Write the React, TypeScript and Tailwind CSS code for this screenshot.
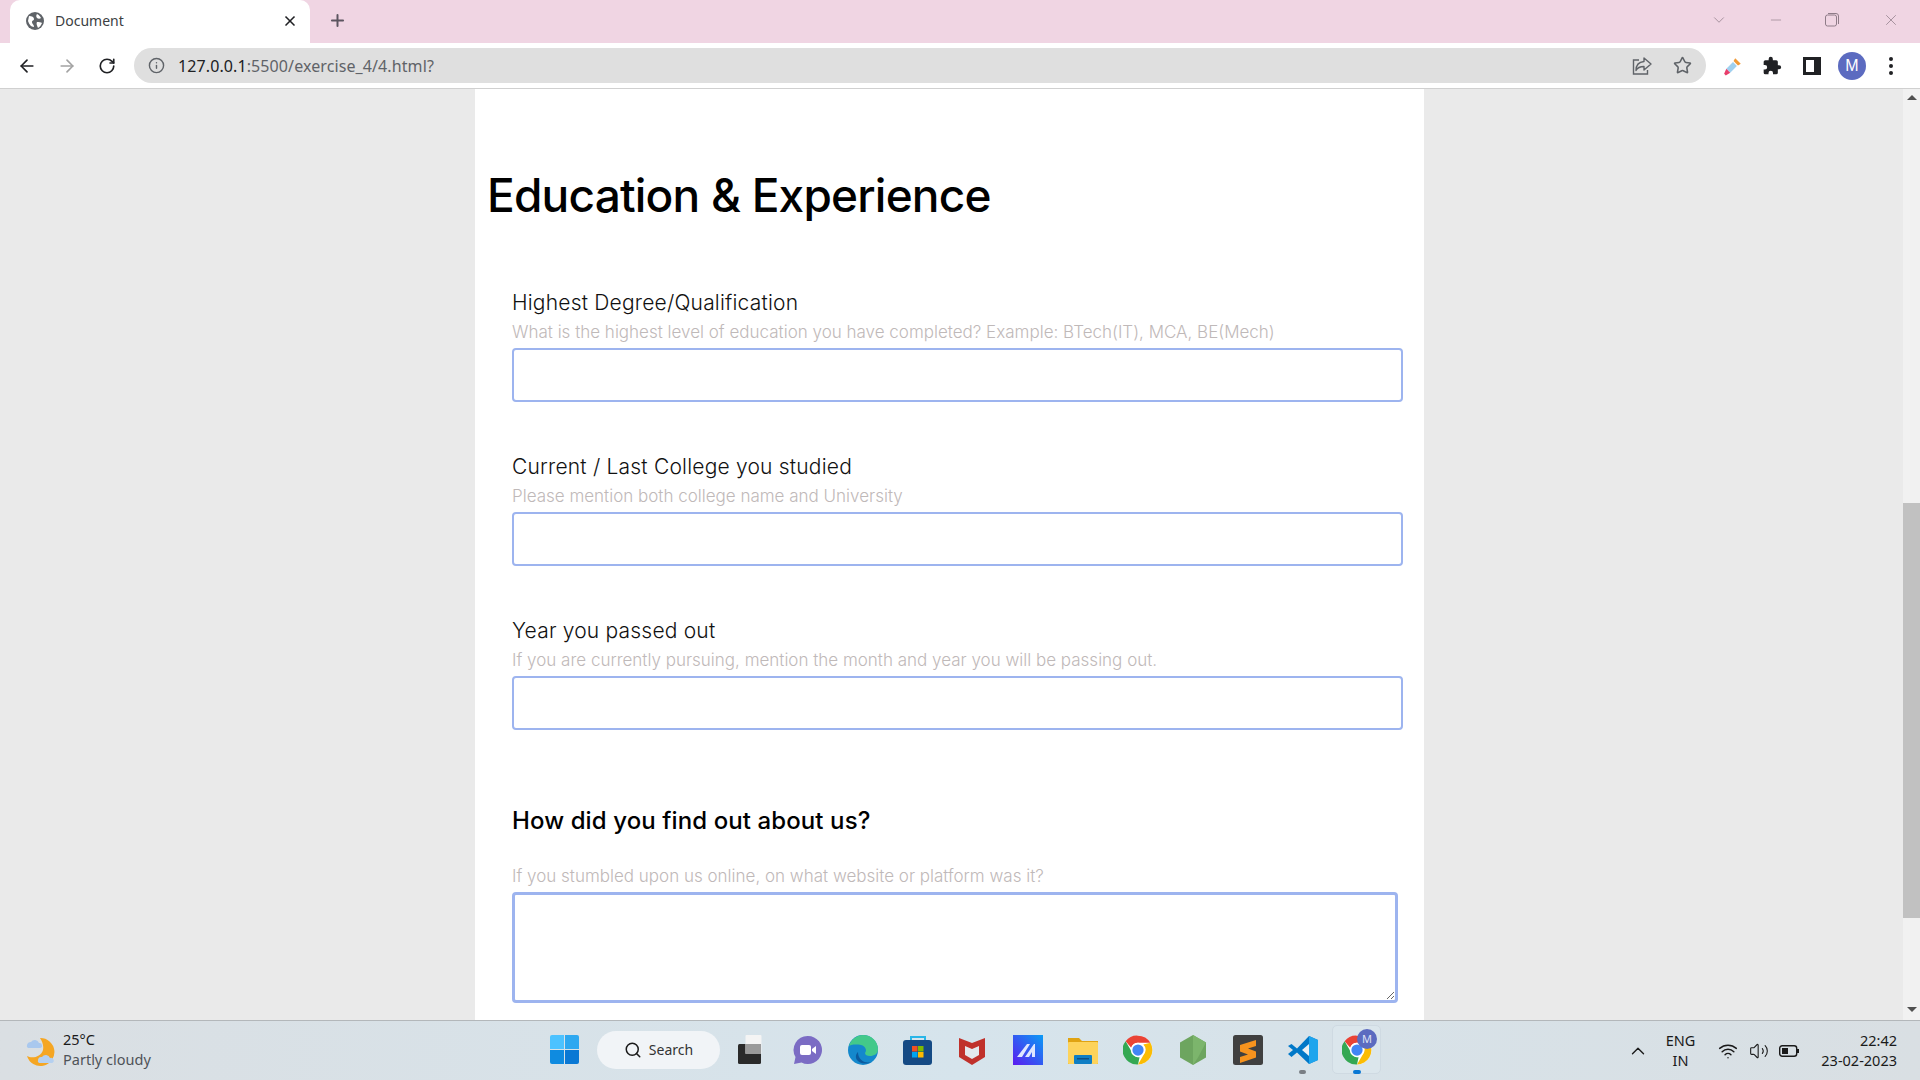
import { ArrowLeft, ArrowRight, RotateCw, Info, Star, Search, ChevronUp, ChevronDown, Minus, X, Plus, Wifi, Volume2 } from "lucide-react";

const uiFont = "font-['Liberation_Sans',Arial,sans-serif]";

const ChromeLogo = ({ size = 30 }: { size?: number }) => (
    <svg width={size} height={size} viewBox="0 0 48 48">
        <circle cx="24" cy="24" r="23" fill="#fff" />
        <path d="M24 1a23 23 0 0 1 19.9 11.5H24a11.5 11.5 0 0 0-10.9 7.8L4.2 10A23 23 0 0 1 24 1z" fill="#ea4335" />
        <path d="M43.9 12.5A23 23 0 0 1 24 47l10-17.2a11.5 11.5 0 0 0-1.5-14.5z" fill="#fbbc04" />
        <path d="M24 47A23 23 0 0 1 4.2 10l10 17.2a11.5 11.5 0 0 0 12.3 8.3z" fill="#34a853" />
        <circle cx="24" cy="24" r="11.5" fill="#fff" />
        <circle cx="24" cy="24" r="9" fill="#4285f4" />
    </svg>
);

const WeatherIcon = () => (
    <svg width="32" height="32" viewBox="0 0 32 32">
        <path d="M16 3a14 14 0 1 1-13 18c5 3 14 1 16-6 1-5-1-9-3-12z" fill="#f5a623" />
        <path d="M3 10a4 4 0 0 1 4-3 4.500 4.500 0 0 1 8 1 2.500 2.500 0 0 1 1 5H4a2.500 2.500 0 0 1-1-3z" fill="#a9c8ee" />
        <path d="M14 25a3.500 3.500 0 0 1 4-3 4.500 4.500 0 0 1 8 1 2.500 2.500 0 0 1 2 5H15a2.500 2.500 0 0 1-1-3z" fill="#b5d0f0" />
    </svg>
);

const WindowsLogo = () => (
    <div className="grid w-[29px] h-[29px] grid-cols-2 gap-[1px]">
        <div className="rounded-tl-[2px] bg-[#4cc2ff]" />
        <div className="rounded-tr-[2px] bg-[#2ea8f0]" />
        <div className="rounded-bl-[2px] bg-[#0f8be0]" />
        <div className="rounded-br-[2px] bg-[#0a78d4]" />
    </div>
);

const TaskView = () => (
    <svg width="24" height="29" viewBox="0 0 24 29">
        <rect x="0" y="9" width="23" height="20" rx="1.500" fill="#2a2a2a" />
        <rect x="7.500" y="0" width="16" height="19" rx="1" fill="#f4f4f4" />
        <rect x="7.500" y="9" width="15.500" height="10" fill="#9a9a9a" />
    </svg>
);

const TeamsChat = () => (
    <svg width="30" height="30" viewBox="0 0 30 30">
        <path d="M15 1a14 14 0 1 1-6.500 26.400L1 29l1.500-7A14 14 0 0 1 15 1z" fill="#7b6cc4" />
        <rect x="7" y="10" width="11" height="10" rx="2" fill="#fff" />
        <path d="M19 14l4-3v8l-4-3z" fill="#fff" />
    </svg>
);

const EdgeLogo = () => (
    <svg width="30" height="30" viewBox="0 0 30 30">
        <circle cx="15" cy="15" r="15" fill="#1488cc" />
        <path d="M1 11C3 4 9 0 15 0c8 0 15 6 15 14 0 5-4 7-8 7-3 0-5-1-5-3 2-2 1-7-4-8-6-1-11 0-12 1z" fill="#43c98a" />
        <path d="M10 17c0 7 6 12 13 10-6 3-12 1-14-2-2-3-1-6 1-8z" fill="#0c5a9e" />
    </svg>
);

const StoreLogo = () => (
    <svg width="30" height="30" viewBox="0 0 30 30">
        <path d="M8 5V2h14v3" fill="none" stroke="#29b6e8" strokeWidth="2" />
        <rect x="0" y="5" width="29" height="25" rx="3" fill="#154a84" />
        <rect x="9" y="11" width="5.500" height="5.500" fill="#f25022" />
        <rect x="15" y="11" width="5.500" height="5.500" fill="#7fba00" />
        <rect x="9" y="17" width="5.500" height="5.500" fill="#00a4ef" />
        <rect x="15" y="17" width="5.500" height="5.500" fill="#ffb900" />
    </svg>
);

const McAfeeLogo = () => (
    <svg width="28" height="30" viewBox="0 0 28 30">
        <path d="M1 3l13 5 13-5v19l-13 8-13-8z" fill="#c0312b" />
        <path d="M7 11l7 3 7-3v9l-7 4-7-4z" fill="#e3e8ec" />
    </svg>
);

const VsBlueLogo = () => (
    <svg width="30" height="30" viewBox="0 0 30 30">
        <defs>
            <linearGradient id="mk" x1="1" y1="0" x2="0" y2="1">
                <stop offset="0" stopColor="#0a9bf5" />
                <stop offset="1" stopColor="#5b1bf0" />
            </linearGradient>
        </defs>
        <rect width="30" height="30" fill="url(#mk)" />
        <path d="M4 22L14 9h3L9 22zM12 22l9-13h1v13h-3v-5l-3 5z" fill="#dfe6ff" />
    </svg>
);

const FolderLogo = () => (
    <svg width="30" height="28" viewBox="0 0 30 28">
        <path d="M0 2h11l3 3h16v23H0z" fill="#e0a312" />
        <rect x="0" y="6" width="30" height="22" rx="1" fill="#fdd35b" />
        <rect x="6" y="19" width="18" height="9" rx="1" fill="#0f7ec4" />
        <rect x="9" y="22" width="12" height="1.500" fill="#0c4f85" />
    </svg>
);

const NodeLogo = () => (
    <svg width="26" height="30" viewBox="0 0 26 30">
        <path d="M13 0l13 7.500v15L13 30 0 22.500v-15z" fill="#6da55f" />
        <path d="M13 0l13 7.500-8 15L13 30z" fill="#7cb56c" />
    </svg>
);

const SublimeLogo = () => (
    <svg width="30" height="30" viewBox="0 0 30 30">
        <rect width="30" height="30" rx="2.500" fill="#404040" />
        <path d="M7 10l16-5v6l-8 2.500 8 3v6L7 28v-6l8-2.500-8-3z" fill="#f7931e" />
    </svg>
);

const VsCodeLogo = () => (
    <svg width="30" height="30" viewBox="0 0 30 30">
        <path d="M21 1l9 4v20l-9 4-12-11.500-5.500 4.500L0 19l5-4-5-4 3.500-2 5.500 4.500z" fill="#0078c8" />
        <path d="M21 1l9 4v20l-9 4z" fill="#1fa5ed" />
        <path d="M21 9l-7 6 7 6z" fill="#eaf0f4" />
    </svg>
);

const Field = ({ label, hint }: { label: string; hint: string }) => (
    <div className="flex flex-col">
        <label className="h-[28px] pt-[1px] text-[21px] leading-[28px] tracking-[0.2px] text-[#111] font-['Inter',sans-serif] font-light">{label}</label>
        <p className="h-[32px] text-[17px] leading-[32px] text-[#bfb9b9] font-['Inter',sans-serif] font-light">{hint}</p>
        <input className="h-[54px] w-[891px] rounded-[4px] border-2 border-[#9db4ef] bg-white outline-none" />
    </div>
);

const App = () => {
    return (
        <div className={`flex h-screen w-full flex-col overflow-hidden bg-white ${uiFont}`}>
            {/* tab strip */}
            <div className="flex h-[43px] shrink-0 items-end bg-[#f0d5e3] pl-[10px]">
                <div className="flex h-[43px] w-[300px] items-center rounded-t-[10px] bg-white pb-[2px] pl-[16px] pr-[12px]">
                    <svg width="18" height="18" viewBox="0 0 18 18" className="shrink-0">
                        <circle cx="9" cy="9" r="9" fill="#5f6368" />
                        <path d="M3 4c3 0 5 1 5 3s-2 1-2 3 2 2 2 5c-3 0-5-3-6-6zM11 2c2 1 3 2 4 4-1 1-3 1-4 0s-1-3 0-4zM11 10c2 0 4 0 5 1-1 2-2 4-4 5-1-2-2-5-1-6z" fill="#fff" />
                    </svg>
                    <span className="ml-[11px] text-[14px] text-[#3c4043] font-['Noto_Sans',sans-serif]">Document</span>
                    <X className="ml-auto text-[#202124]" size={16} strokeWidth={2.500} />
                </div>
                <div className="flex h-[43px] w-[54px] items-center justify-center pb-[2px]">
                    <Plus size={19} strokeWidth={2.500} className="text-[#5c5560]" />
                </div>
                <div className="ml-auto flex h-[43px] items-center pb-[4px] pr-[20px] text-[#8f7c88]">
                    <ChevronDown size={18} strokeWidth={1} className="mr-[40px]" />
                    <Minus size={16} strokeWidth={1} className="mr-[41px]" />
                    <svg width="14" height="14" viewBox="0 0 14 14" className="mr-[43px]">
                        <rect x="0.500" y="2" width="11" height="11" rx="2" fill="none" stroke="#8f7c88" />
                        <path d="M3 .5h8a2.500 2.500 0 0 1 2.500 2.500v8" fill="none" stroke="#8f7c88" />
                    </svg>
                    <X size={18} strokeWidth={1} />
                </div>
            </div>

            {/* toolbar */}
            <div className="flex h-[46px] shrink-0 items-center border-b border-[#d0d0d0] bg-white pl-[17px]">
                <ArrowLeft size={20} strokeWidth={2} className="text-[#202124]" />
                <ArrowRight size={20} strokeWidth={2} className="ml-[20px] text-[#a3a3a3]" />
                <RotateCw size={18} strokeWidth={2.200} className="ml-[21px] text-[#202124]" />
                <div className="ml-[18px] flex h-[35px] w-[1572px] items-center rounded-full bg-[#dfdfdf] pl-[14px] pr-[14px]">
                    <Info size={17} strokeWidth={2} className="text-[#5f6368]" />
                    <span className="ml-[13px] text-[16px] tracking-[0.1px] text-[#5f6368] font-['Noto_Sans',sans-serif]">
                        <span className="text-[#202124]">127.0.0.1</span>:5500/exercise_4/4.html?
                    </span>
                    <svg width="20" height="20" viewBox="0 0 20 20" className="ml-auto">
                        <path d="M7 4H1.500v14h14v-4" fill="none" stroke="#5f6368" strokeWidth="1.400" />
                        <path d="M12 2l7 6-7 6v-3.500c-4 0-6.500 1-8 4 0-5 3-8.500 8-9z" fill="#dfdfdf" stroke="#5f6368" strokeWidth="1.400" strokeLinejoin="round" />
                    </svg>
                    <Star size={19} strokeWidth={2} className="ml-[21px] text-[#5f6368]" />
                </div>
                <svg width="20" height="20" viewBox="0 0 18 18" className="ml-[17px]">
                    <path d="M11 2l5 5-2.500 1.500-4-4z" fill="#f09a37" />
                    <path d="M9 5.500l3.500 3.500-6 6-3.500-3.500z" fill="#9fd0ef" />
                    <path d="M3 11.500l3.500 3.500-4 2.500-1.500-1.500z" fill="#e83e6b" />
                </svg>
                <svg width="20" height="20" viewBox="0 0 24 24" className="ml-[19px]">
                    <path d="M20.500 11H19V7a2 2 0 0 0-2-2h-4V3.500a2.500 2.500 0 0 0-5 0V5H4a2 2 0 0 0-2 2v3.800h1.500a2.700 2.700 0 0 1 0 5.400H2V20a2 2 0 0 0 2 2h3.800v-1.500a2.700 2.700 0 0 1 5.400 0V22H17a2 2 0 0 0 2-2v-4h1.500a2.500 2.500 0 0 0 0-5z" fill="#202124" />
                </svg>
                <div className="ml-[21px] flex h-[18px] w-[18px] border-[3px] border-[#202124] bg-[#202124]">
                    <div className="h-full w-[8px] bg-white" />
                </div>
                <div className="ml-[17px] flex h-[28px] w-[28px] items-center justify-center rounded-full bg-[#5c6bc0] text-[16px] text-white">M</div>
                <div className="ml-[23px] flex flex-col gap-[3px]">
                    <div className="h-[4px] w-[4px] rounded-full bg-[#202124]" />
                    <div className="h-[4px] w-[4px] rounded-full bg-[#202124]" />
                    <div className="h-[4px] w-[4px] rounded-full bg-[#202124]" />
                </div>
            </div>

            {/* page */}
            <div className="flex min-h-0 flex-1 bg-[#eaeaea]">
                <div className="w-[475px] shrink-0" />
                <div className="w-[949px] shrink-0 overflow-hidden bg-white pl-[12px]">
                    <h1 className="mt-[76px] h-[60px] text-[46px] leading-[60px] text-black font-['Inter',sans-serif] font-medium tracking-[-0.8px]">Education &amp; Experience</h1>
                    <div className="mt-[63px] flex flex-col gap-[50px] pl-[25px]">
                        <Field label="Highest Degree/Qualification" hint="What is the highest level of education you have completed? Example: BTech(IT), MCA, BE(Mech)" />
                        <Field label="Current / Last College you studied" hint="Please mention both college name and University" />
                        <Field label="Year you passed out" hint="If you are currently pursuing, mention the month and year you will be passing out." />
                    </div>
                    <div className="pl-[25px]">
                        <h2 className="mt-[75px] h-[32px] text-[24px] leading-[32px] tracking-[0.1px] text-black font-['Inter',sans-serif] font-medium">How did you find out about us?</h2>
                        <p className="mt-[24px] h-[31px] text-[17px] leading-[30px] text-[#bfb9b9] font-['Inter',sans-serif] font-light">If you stumbled upon us online, on what website or platform was it?</p>
                        <textarea className="block h-[111px] w-[886px] rounded-[4px] border-[3px] border-[#9db4ef] bg-white outline-none" />
                    </div>
                </div>
                <div className="flex-1" />
                {/* scrollbar */}
                <div className="flex w-[17px] shrink-0 flex-col items-center bg-[#f1f1f1]">
                    <div className="mt-[6px] h-0 w-0 border-x-[5px] border-b-[5px] border-x-transparent border-b-[#505050]" />
                    <div className="mt-[403px] h-[415px] w-full bg-[#c1c1c1]" />
                    <div className="mt-[89px] h-0 w-0 border-x-[5px] border-t-[5px] border-x-transparent border-t-[#505050]" />
                </div>
            </div>

            {/* taskbar */}
            <div className="relative flex h-[60px] shrink-0 items-center border-t border-[#b3b7ba] bg-linear-to-r from-[#dadfe3] via-[#d6e4ec] to-[#d9dfe3] font-['Noto_Sans',sans-serif]">
                <div className="flex w-[550px] items-center pl-[24px]">
                    <WeatherIcon />
                    <div className="ml-[7px] flex flex-col pb-[3px] text-[14.500px] leading-[20px]">
                        <span className="text-[#1a1a1a]">25°C</span>
                        <span className="text-[#4f5358]">Partly cloudy</span>
                    </div>
                </div>
                <div className="flex items-center pb-[2px]">
                    <WindowsLogo />
                    <div className="ml-[18px] flex h-[38px] w-[123px] items-center justify-center gap-[7px] rounded-full bg-[#f1f4f7] text-[14px] text-[#333]">
                        <Search size={18} strokeWidth={2} className="text-[#1a1a1a]" />
                        Search
                    </div>
                    <div className="ml-[18px]"><TaskView /></div>
                    <div className="ml-[31px]"><TeamsChat /></div>
                    <div className="ml-[25px]"><EdgeLogo /></div>
                    <div className="ml-[25px]"><StoreLogo /></div>
                    <div className="ml-[25px]"><McAfeeLogo /></div>
                    <div className="ml-[27px]"><VsBlueLogo /></div>
                    <div className="ml-[25px]"><FolderLogo /></div>
                    <div className="ml-[25px]"><ChromeLogo /></div>
                    <div className="ml-[27px]"><NodeLogo /></div>
                    <div className="ml-[27px]"><SublimeLogo /></div>
                    <div className="relative ml-[25px]">
                        <VsCodeLogo />
                        <div className="absolute bottom-[-9px] left-[11px] h-[4px] w-[7px] rounded-full bg-[#7a7f85]" />
                    </div>
                    <div className="relative ml-[14px] flex h-[49px] w-[49px] items-center justify-center rounded-[5px] border border-[#cfdae2] bg-[#dbe6ec]">
                        <ChromeLogo />
                        <div className="absolute right-[3px] top-[3px] flex h-[20px] w-[20px] items-center justify-center rounded-full bg-[#5c6bc0] text-[11px] text-[#dfe3f5]">M</div>
                        <div className="absolute bottom-[-1px] left-[20px] h-[4px] w-[8px] rounded-full bg-[#0a78d4]" />
                    </div>
                </div>
                <div className="ml-auto flex items-center pr-[23px] text-[#1a1a1a]">
                    <ChevronUp size={22} strokeWidth={1.500} />
                    <div className="ml-[17px] flex flex-col items-center pb-[2px] text-[14.500px] leading-[20px]">
                        <span>ENG</span>
                        <span>IN</span>
                    </div>
                    <Wifi size={20} strokeWidth={1.800} className="ml-[23px]" />
                    <Volume2 size={20} strokeWidth={1.300} className="ml-[11px]" />
                    <svg width="20" height="12" viewBox="0 0 20 12" className="ml-[10px]">
                        <rect x="0.700" y="0.700" width="17" height="10.600" rx="2.500" fill="none" stroke="#1a1a1a" strokeWidth="1.400" />
                        <rect x="3" y="3" width="6" height="6" fill="#1a1a1a" />
                        <rect x="18" y="4" width="2" height="4" fill="#1a1a1a" />
                    </svg>
                    <div className="ml-[22px] flex flex-col items-end pb-[2px] text-[14.500px] leading-[20px]">
                        <span>22:42</span>
                        <span>23-02-2023</span>
                    </div>
                </div>
            </div>
        </div>
    );
};

export default App;
